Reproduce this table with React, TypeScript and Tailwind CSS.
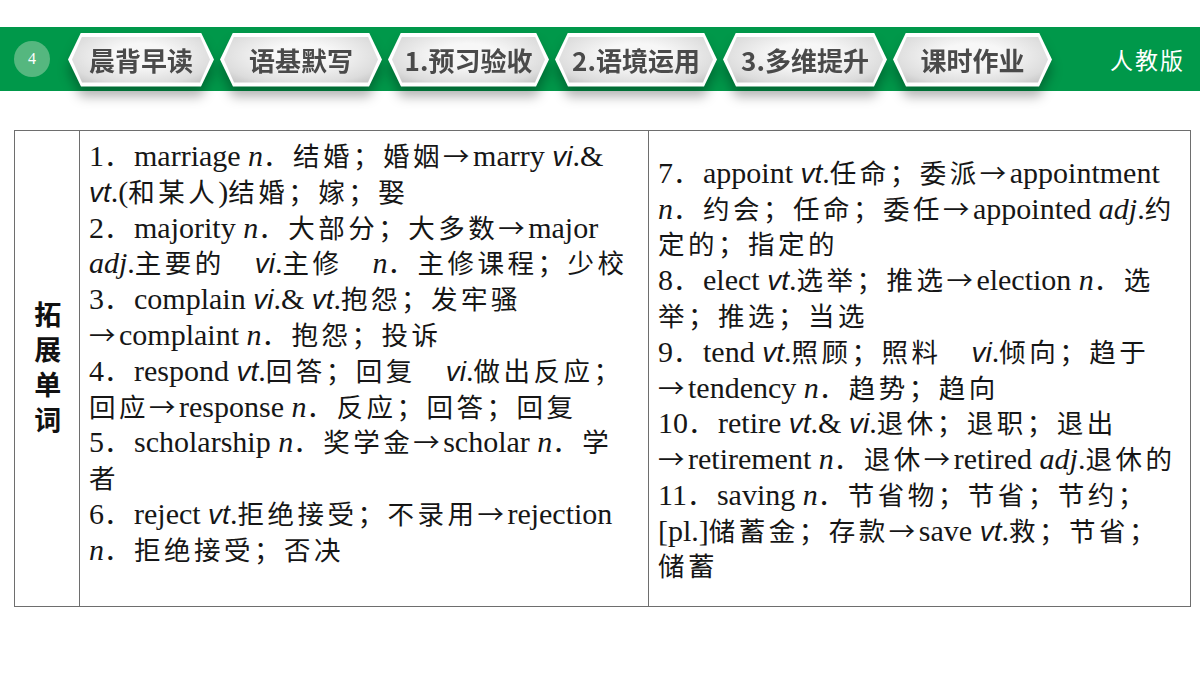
import React from "react";

const CJK = /([\u2192\u3000-\u9fff\uff00-\uffef]+)/;

function plain(s: string, k: string) {
  return s.split(CJK).map((p, i) =>
    p === "" ? null : CJK.test(p) ? (
      <span key={k + i} className="font-['Noto_Sans_CJK_SC',sans-serif] text-[26.5px] tracking-[3.5px]">
        {p}
      </span>
    ) : (
      <span key={k + i}>{p}</span>
    )
  );
}

function R(s: string) {
  const parts = s.split(/(_[^_]+_|\^[^^]+\^)/);
  return parts.map((p, i) => {
    if (p.startsWith("_") && p.endsWith("_") && p.length > 2)
      return (
        <span key={i} className="italic font-['Liberation_Serif']">
          {p.slice(1, -1)}
        </span>
      );
    if (p.startsWith("^") && p.endsWith("^") && p.length > 2)
      return (
        <span key={i} className="italic font-['Liberation_Sans'] text-[28px]">
          {p.slice(1, -1)}
        </span>
      );
    return <React.Fragment key={i}>{plain(p, "p" + i)}</React.Fragment>;
  });
}

const L = ({ s }: { s: string }) => (
  <div className="whitespace-nowrap h-[35.8px] leading-[35.8px]">{R(s)}</div>
);

const tabs = [
  { t: "晨背早读", w: "w-[146px]" },
  { t: "语基默写", w: "w-[162px]" },
  { t: "1.预习验收", w: "w-[161px]" },
  { t: "2.语境运用", w: "w-[162px]" },
  { t: "3.多维提升", w: "w-[164px]" },
  { t: "课时作业", w: "w-[159px]" },
];

function Tab({ t, w }: { t: string; w: string }) {
  return (
    <div className={`${w} h-[54px] [filter:drop-shadow(0_10px_6px_rgba(0,0,0,0.3))]`}>
      <div className="h-full w-full bg-white p-[4px] [clip-path:polygon(13px_0,calc(100%-13px)_0,100%_50%,calc(100%-13px)_100%,13px_100%,0_50%)]">
        <div className="flex h-full w-full items-center justify-center bg-[radial-gradient(ellipse_at_50%_40%,#f7f7f7_30%,#dcdcdc_75%,#bdbdbd_100%)] [clip-path:polygon(10px_0,calc(100%-10px)_0,100%_50%,calc(100%-10px)_100%,10px_100%,0_50%)]">
          <span className="font-['Noto_Sans_CJK_SC',sans-serif] text-[26px] font-bold text-[#4a4a4a]">
            {t}
          </span>
        </div>
      </div>
    </div>
  );
}

const left = [
  "1．marriage _n_．结婚；婚姻→marry ^vi^.&",
  "^vt^.(和某人)结婚；嫁；娶",
  "2．majority _n_．大部分；大多数→major",
  "_adj_.主要的　^vi^.主修　_n_．主修课程；少校",
  "3．complain ^vi^.& ^vt^.抱怨；发牢骚",
  "→complaint _n_．抱怨；投诉",
  "4．respond ^vt^.回答；回复　^vi^.做出反应；",
  "回应→response _n_．反应；回答；回复",
  "5．scholarship _n_．奖学金→scholar _n_．学",
  "者",
  "6．reject ^vt^.拒绝接受；不录用→rejection",
  "_n_．拒绝接受；否决",
];

const right = [
  "7．appoint ^vt^.任命；委派→appointment",
  "_n_．约会；任命；委任→appointed _adj_.约",
  "定的；指定的",
  "8．elect ^vt^.选举；推选→election _n_．选",
  "举；推选；当选",
  "9．tend ^vt^.照顾；照料　^vi^.倾向；趋于",
  "→tendency _n_．趋势；趋向",
  "10．retire ^vt^.& ^vi^.退休；退职；退出",
  "→retirement _n_．退休→retired _adj_.退休的",
  "11．saving _n_．节省物；节省；节约；",
  "[pl.]储蓄金；存款→save ^vt^.救；节省；",
  "储蓄",
];

export default function App() {
  return (
    <div className="w-[1200px] h-[675px] bg-white overflow-hidden font-['Liberation_Serif','Noto_Sans_CJK_SC',serif] text-[#161616]">
      <div className="h-[27px]" />
      <div className="h-[64px] bg-[#00984a] flex items-center pl-[14px] pr-[15px]">
        <div className="w-[36px] h-[36px] rounded-full bg-[#55b77f] flex items-center justify-center text-white text-[16px] font-['Liberation_Serif']">
          4
        </div>
        <div className="ml-[18px] flex items-center gap-[6px] pt-[1px]">
          {tabs.map((x) => (
            <Tab key={x.t} t={x.t} w={x.w} />
          ))}
        </div>
        <div className="ml-auto text-white text-[23px] tracking-[2px] font-['Noto_Sans_CJK_SC',serif]">
          人教版
        </div>
      </div>

      <div className="mt-[39px] mx-[14px] w-[1177px] h-[477px] border border-[#6e6e6e] flex">
        <div className="w-[65px] border-r border-[#6e6e6e] flex items-center justify-center">
          <div className="[writing-mode:vertical-rl] font-['Noto_Sans_CJK_SC',sans-serif] font-bold text-[27px] tracking-[8px] text-[#111] pt-[4px]">
            拓展单词
          </div>
        </div>
        <div className="w-[569px] border-r border-[#6e6e6e] pl-[9px] pt-[6px] text-[30px]">
          {left.map((s, i) => (
            <L key={i} s={s} />
          ))}
        </div>
        <div className="flex-1 pl-[9px] flex flex-col justify-center text-[30px]">
          {right.map((s, i) => (
            <L key={i} s={s} />
          ))}
        </div>
      </div>
    </div>
  );
}
